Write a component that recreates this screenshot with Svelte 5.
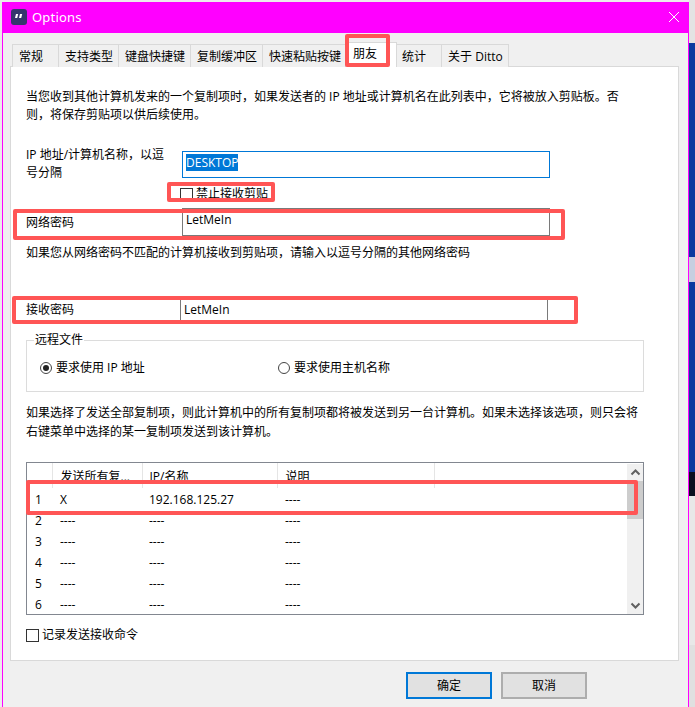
<script>
	const tabs = ['常规', '支持类型', '键盘快捷键', '复制缓冲区', '快速粘贴按键', '朋友', '统计', '关于 Ditto'];
	const active = '朋友';
	const rows = [
		['1', 'X', '192.168.125.27', '----'],
		['2', '----', '----', '----'],
		['3', '----', '----', '----'],
		['4', '----', '----', '----'],
		['5', '----', '----', '----'],
		['6', '----', '----', '----']
	];
	// the strip of desktop that shows to the right of the dialog
	const strip = [
		['#e3e3e3', 43],
		['#0b3a9f', 214],
		['#c6cfe0', 25],
		['#0b3a9f', 190],
		['#0a1020', 24],
		['#e8e8e8', 149],
		['#e0e0e0', 62]
	];
</script>

<div class="desktop">
	<div class="window">
		<header class="titlebar">
			<svg class="logo" width="16" height="16" viewBox="0 0 16 16">
				<rect width="16" height="16" rx="3" fill="#36366e" />
				<path d="M5 5h2.2l-1 4H4zM9 5h2.2l-1 4H8z" fill="#fff" />
			</svg>
			<span class="title">Options</span>
			<svg class="close" width="10" height="10" viewBox="0 0 10 10">
				<path d="M0 0L10 10M10 0L0 10" stroke="#fff" stroke-width="1" fill="none" />
			</svg>
		</header>

		<div class="body">
			<nav class="tabs">
				{#each tabs as tab}
					<div class="tab" class:active={tab === active}>{tab}</div>
				{/each}
			</nav>

			<section class="panel">
				<p class="intro">当您收到其他计算机发来的一个复制项时，如果发送者的 IP 地址或计算机名在此列表中，它将被放入剪贴板。否则，将保存剪贴项以供后续使用。</p>

				<div class="field ip">
					<div class="label wrap">IP 地址/计算机名称，以逗号分隔</div>
					<div class="input focus"><span class="selected">DESKTOP</span></div>
				</div>

				<div class="check block">
					<span class="box"></span>
					<span>禁止接收剪贴</span>
				</div>

				<div class="field net">
					<div class="label">网络密码</div>
					<div class="input">LetMeIn</div>
				</div>

				<p class="hint">如果您从网络密码不匹配的计算机接收到剪贴项，请输入以逗号分隔的其他网络密码</p>

				<div class="field recv">
					<div class="label">接收密码</div>
					<div class="input">LetMeIn</div>
				</div>

				<fieldset class="group">
					<legend>远程文件</legend>
					<div class="radios">
						<div class="radio"><span class="dot on"></span>要求使用 IP 地址</div>
						<div class="radio"><span class="dot"></span>要求使用主机名称</div>
					</div>
				</fieldset>

				<p class="note">如果选择了发送全部复制项，则此计算机中的所有复制项都将被发送到另一台计算机。如果未选择该选项，则只会将右键菜单中选择的某一复制项发送到该计算机。</p>

				<div class="list">
					<table>
						<thead>
							<tr>
								<th class="c0"></th>
								<th class="c1">发送所有复...</th>
								<th class="c2">IP/名称</th>
								<th class="c3">说明</th>
								<th></th>
							</tr>
						</thead>
						<tbody>
							{#each rows as row}
								<tr>
									{#each row as cell}
										<td>{cell}</td>
									{/each}
									<td></td>
								</tr>
							{/each}
						</tbody>
					</table>
					<div class="scrollbar">
						<svg width="17" height="17" viewBox="0 0 17 17">
							<path d="M4.5 10.5L8.5 6.5L12.5 10.5" stroke="#606060" stroke-width="2" fill="none" />
						</svg>
						<div class="thumb"></div>
						<svg class="down" width="17" height="17" viewBox="0 0 17 17">
							<path d="M4.5 6.5L8.5 10.5L12.5 6.5" stroke="#606060" stroke-width="2" fill="none" />
						</svg>
					</div>
				</div>

				<div class="check log">
					<span class="box"></span>
					<span>记录发送接收命令</span>
				</div>
			</section>

			<footer class="actions">
				<button class="primary" type="button">确定</button>
				<button type="button">取消</button>
			</footer>
		</div>
	</div>

	<aside class="strip">
		{#each strip as [color, height]}
			<div style="background: {color}; height: {height}px"></div>
		{/each}
	</aside>

	<div class="mark m-tab"></div>
	<div class="mark m-check"></div>
	<div class="mark m-net"></div>
	<div class="mark m-recv"></div>
	<div class="mark m-row"></div>
</div>

<style>
	:global(body) {
		margin: 0;
		background: #ececec;
		overflow: hidden;
	}

	.desktop {
		position: relative;
		display: flex;
		width: 695px;
		height: 707px;
		padding: 2px 0 0 2px;
		box-sizing: border-box;
		font-family: 'Open Sans', 'Noto Sans CJK SC', sans-serif;
		font-size: 12px;
		line-height: 18px;
		color: #000;
		overflow: hidden;
	}

	.window {
		width: 687px;
		height: 705px;
		flex: none;
		display: flex;
		flex-direction: column;
		box-sizing: border-box;
		border: solid #f0f;
		border-width: 0 1px;
		background: #f0f0f0;
	}

	.strip {
		flex: none;
		width: 6px;
		margin-top: -2px;
	}

	.titlebar {
		height: 31px;
		flex: none;
		display: flex;
		align-items: center;
		box-sizing: border-box;
		background: #f0f;
		color: #fff;
		padding: 0 9px 1px 8px;
	}

	.title {
		margin-left: 5px;
		font-family: 'Noto Sans', sans-serif;
		font-size: 13px;
		letter-spacing: 0.2px;
	}

	.close {
		margin-left: auto;
	}

	.body {
		flex: 1;
		display: flex;
		flex-direction: column;
		padding: 9px 9px 0 7px;
	}

	.tabs {
		display: flex;
		align-items: flex-end;
		height: 25px;
		padding-left: 2px;
		position: relative;
		z-index: 1;
		margin-bottom: -1px;
	}

	.tab {
		height: 23px;
		min-width: 47px;
		box-sizing: border-box;
		padding: 3px 5px 0 6px;
		border: 1px solid #d9d9d9;
		border-bottom: none;
		margin-right: -1px;
		background: #f0f0f0;
		white-space: nowrap;
	}

	.tab.active {
		height: 25px;
		min-width: 52px;
		padding: 2px 8px 0 7px;
		margin: 0 -2px 0 -1px;
		background: #fff;
		position: relative;
		z-index: 1;
	}

	.panel {
		height: 595px;
		box-sizing: border-box;
		border: 1px solid #d9d9d9;
		background: #fff;
		padding: 21px 15px 0;
	}

	p {
		margin: 0;
	}

	.intro {
		width: 612px;
		height: 36px;
	}

	.field {
		display: grid;
		grid-template-columns: 156px 368px;
		align-items: center;
	}

	.wrap {
		width: 140px;
	}

	.input {
		box-sizing: border-box;
		border: 1px solid #7a7a7a;
		height: 28px;
		padding: 2px 3px;
		background: #fff;
	}

	.ip {
		margin-top: 22px;
		align-items: start;
		height: 37px;
	}

	.ip .input {
		margin-top: 5px;
		height: 27px;
	}

	.focus {
		border-color: #0078d7;
	}

	.selected {
		background: #0078d7;
		color: #fff;
	}

	.check {
		display: flex;
		align-items: center;
		gap: 3px;
	}

	.box {
		width: 13px;
		height: 13px;
		flex: none;
		box-sizing: border-box;
		border: 1px solid #333;
	}

	.block {
		margin: 2px 0 0 154px;
		height: 18px;
	}

	.net {
		margin-top: 5px;
	}

	.net .label {
		padding-top: 2px;
	}

	.net .input {
		padding-top: 2px;
	}

	.hint {
		margin-top: 8px;
	}

	.recv {
		margin-top: 34px;
		grid-template-columns: 154px 368px;
	}

	.recv .input {
		padding: 4px 3px;
	}

	.group {
		margin: 8px 0 0;
		padding: 0;
		width: 618px;
		height: 60px;
		box-sizing: border-box;
		border: 1px solid #dcdcdc;
		min-inline-size: 0;
	}

	legend {
		margin-left: 7px;
		padding: 0 1px;
		line-height: 16px;
	}

	.radios {
		display: flex;
		margin-top: 11px;
		padding-left: 13px;
	}

	.radio {
		display: flex;
		align-items: center;
		gap: 4px;
		width: 238px;
	}

	.dot {
		width: 12px;
		height: 12px;
		flex: none;
		box-sizing: border-box;
		border: 1px solid #444;
		border-radius: 50%;
		display: flex;
		align-items: center;
		justify-content: center;
	}

	.dot.on::after {
		content: '';
		width: 6px;
		height: 6px;
		border-radius: 50%;
		background: #222;
	}

	.note {
		margin-top: 11px;
		width: 618px;
		line-height: 19px;
	}

	.list {
		margin-top: 21px;
		width: 618px;
		height: 153px;
		box-sizing: border-box;
		border: 1px solid #828790;
		display: flex;
		overflow: hidden;
	}

	table {
		flex: 1;
		table-layout: fixed;
		border-collapse: collapse;
		height: 151px;
	}

	th {
		height: 25px;
		padding: 2px 8px 0;
		font-weight: 400;
		text-align: left;
		box-sizing: border-box;
		white-space: nowrap;
		border-right: 1px solid #e5e5e5;
	}

	th:last-child {
		border-right: none;
	}

	.c0 {
		width: 25px;
	}

	.c1 {
		width: 90px;
	}

	.c2 {
		width: 135px;
		padding-left: 7px;
	}

	.c3 {
		width: 157px;
	}

	td {
		height: 21px;
		padding: 2px 8px 0;
		box-sizing: border-box;
	}

	td:nth-child(3) {
		padding-left: 7px;
	}

	.scrollbar {
		width: 16px;
		flex: none;
		margin: 1px 0 0;
		background: #f0f0f0;
		display: flex;
		flex-direction: column;
	}

	.thumb {
		height: 38px;
		background: #cdcdcd;
	}

	.down {
		margin-top: auto;
	}

	.log {
		margin-top: 11px;
	}

	.actions {
		display: flex;
		justify-content: flex-end;
		gap: 9px;
		padding: 11px 92px 0 0;
	}

	button {
		width: 86px;
		height: 27px;
		padding: 0;
		border: 2px solid #adadad;
		background: #e1e1e1;
		font: inherit;
		color: #000;
	}

	.primary {
		border-color: #0078d7;
	}

	/* red annotation boxes drawn over the screenshot */
	.mark {
		position: absolute;
		box-sizing: border-box;
		border: 4px solid #ff5555;
		border-radius: 2px;
		z-index: 5;
	}

	.m-tab {
		left: 345px;
		top: 34px;
		width: 45px;
		height: 33px;
	}

	.m-check {
		left: 167px;
		top: 182px;
		width: 108px;
		height: 20px;
	}

	.m-net {
		left: 13px;
		top: 209px;
		width: 552px;
		height: 31px;
	}

	.m-recv {
		left: 12px;
		top: 296px;
		width: 566px;
		height: 28px;
	}

	.m-row {
		left: 26px;
		top: 480px;
		width: 612px;
		height: 35px;
	}
</style>
